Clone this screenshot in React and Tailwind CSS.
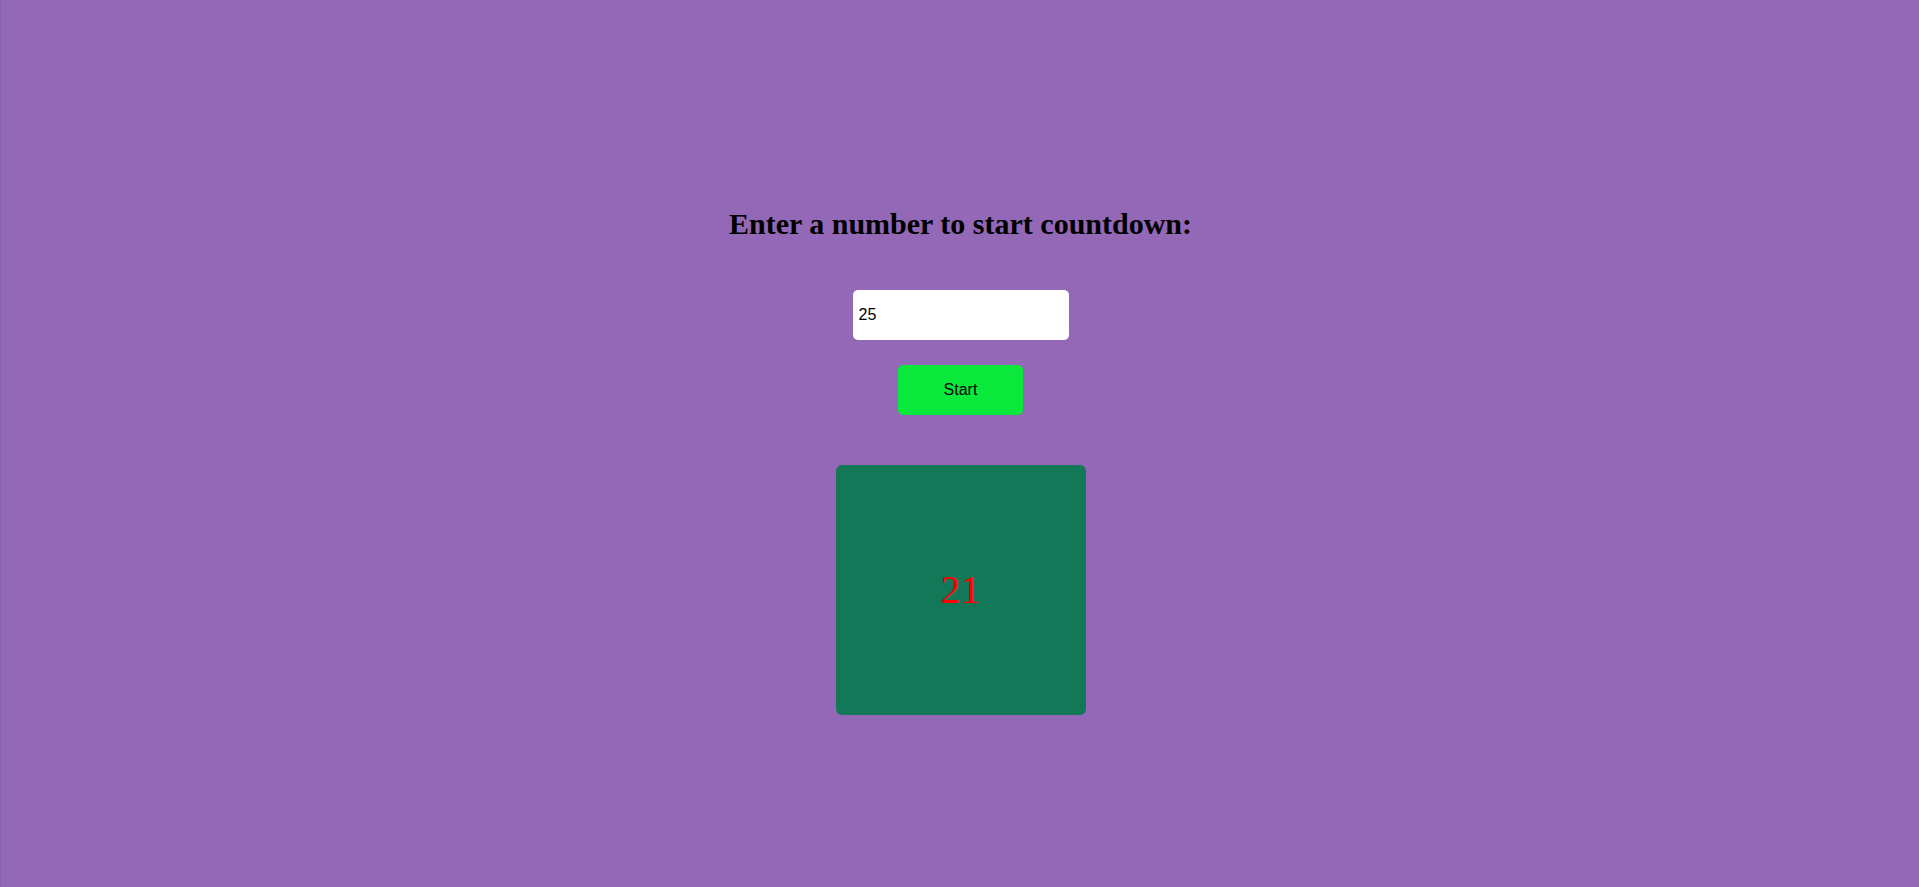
import React, { useState } from "react";

const App = () => {
  const [value, setValue] = useState("25");
  const [count] = useState(21);

  return (
    <div className="min-h-screen w-full bg-[#9368b7] border-l border-[#8563a3] pl-[1px] flex flex-col items-center pt-[207px]">
      <h2 className="font-['Liberation_Serif','Times_New_Roman',serif] font-bold text-[30px] leading-[33px] text-black">
        Enter a number to start countdown:
      </h2>

      <input
        type="text"
        value={value}
        onChange={(e) => setValue(e.target.value)}
        className="mt-[50px] w-[216px] h-[50px] rounded-[5px] bg-white px-[6px] font-['Liberation_Sans',Arial,sans-serif] text-[16px] text-black outline-none"
      />

      <button
        type="button"
        className="mt-[25px] w-[125px] h-[50px] rounded-[5px] bg-[#0ae93b] font-['Liberation_Sans',Arial,sans-serif] text-[16px] text-black"
      >
        Start
      </button>

      {/* countdown box */}
      <div className="mt-[50px] w-[250px] h-[250px] rounded-[6px] bg-[#127858] flex items-center justify-center">
        <span className="font-['Liberation_Serif','Times_New_Roman',serif] text-[40px] leading-none text-[#ff0000]">
          {count}
        </span>
      </div>
    </div>
  );
};

export default App;
